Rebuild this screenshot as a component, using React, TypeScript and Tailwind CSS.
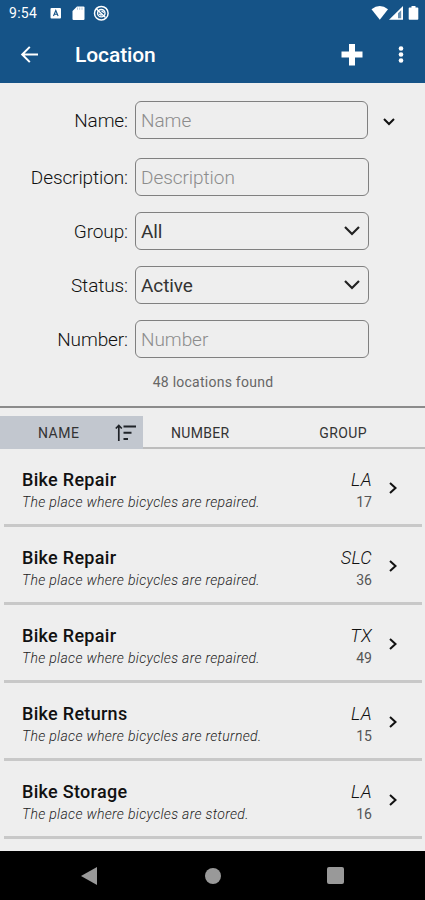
import { ReactNode } from "react";

interface LocationItem {
  name: string;
  description: string;
  group: string;
  count: number;
}

const locations: LocationItem[] = [
  { name: "Bike Repair", description: "The place where bicycles are repaired.", group: "LA", count: 17 },
  { name: "Bike Repair", description: "The place where bicycles are repaired.", group: "SLC", count: 36 },
  { name: "Bike Repair", description: "The place where bicycles are repaired.", group: "TX", count: 49 },
  { name: "Bike Returns", description: "The place where bicycles are returned.", group: "LA", count: 15 },
  { name: "Bike Storage", description: "The place where bicycles are stored.", group: "LA", count: 16 },
];

function StatusBar() {
  return (
    <div className="flex h-[26px] items-center pl-[9px] pr-[6px]">
      <span className="w-[41px] text-[14px] leading-[28px] tracking-[0.3px]">9:54</span>
      <svg className="h-[26px] w-[62px]" viewBox="50 0 62 26" fill="none">
        <rect x="50.5" y="8" width="10.5" height="10.5" rx="1" fill="#fff" />
        <path d="M53.5 16l2.3-5.5 2.3 5.5M54.3 14.2h3" stroke="#155387" strokeWidth="1.1" />
        <path d="M77 6.500h6.500q1 0 1 1V19q0 1-1 1H73.500q-1 0-1-1v-8z" fill="#fff" />
        <path d="M77.500 7.500v2.300M79.700 7.500v2.300M82 7.500v2.300" stroke="#155387" strokeOpacity=".4" strokeWidth=".8" />
        <circle cx="101.300" cy="13.200" r="6.800" stroke="#fff" strokeWidth="1.500" />
        <circle cx="101.300" cy="13.200" r="3.700" stroke="#fff" strokeWidth="1.400" />
        <path d="M96.500 9l9 8.500M99 14l2.500 1.500M101.500 11l2.500 1.500" stroke="#fff" strokeWidth="1.400" />
      </svg>
      <svg className="ml-auto h-[26px] w-[48px]" viewBox="371 0 48 26">
        <path d="M371.500 9.300Q379.800 2.500 388 9.300L379.800 19.700z" fill="#fff" />
        <path d="M389 19.700L403 6v13.700z" fill="#fff" />
        <path d="M398 13.200l3.200-3v8h-3.200z" fill="#155387" fillOpacity=".65" />
        <path d="M409.500 7.500h2V6h4v1.500h2q.8 0 .8.800v10.600q0 .8-.8.800h-8q-.8 0-.8-.8V8.300q0-.8.800-.8z" fill="#fff" />
      </svg>
    </div>
  );
}

function AppBar() {
  return (
    <div className="flex h-[57px] items-center pl-5">
      <button aria-label="Back">
        <svg className="h-5 w-5" viewBox="0 0 20 20" fill="none" stroke="#fff" strokeWidth="2">
          <path d="M18 9.500H2.500M9.800 1.900L2.200 9.500l7.600 7.600" />
        </svg>
      </button>
      <h1 className="ml-[35px] pt-px text-[21px] font-medium leading-7 tracking-[-0.1px]">Location</h1>
      <button aria-label="Add" className="ml-auto">
        <svg className="h-[22px] w-[22px]" viewBox="0 0 22 22" fill="#fff">
          <path d="M8 0h6v7.500h7.500v6H14V21.500H8v-8H.5v-6H8z" />
        </svg>
      </button>
      <button aria-label="More" className="ml-[33px] mr-[19px]">
        <svg className="h-5 w-[10px]" viewBox="0 0 10 20" fill="#fff">
          <circle cx="5" cy="3.500" r="2.300" />
          <circle cx="5" cy="9.500" r="2.300" />
          <circle cx="5" cy="15.500" r="2.300" />
        </svg>
      </button>
    </div>
  );
}

function FieldRow({ label, children }: { label: string; children: ReactNode }) {
  return (
    <label className="flex h-[38px] items-center">
      <span className="mr-[7px] w-32 pt-[3px] text-right text-[19px] font-light tracking-[-0.1px] text-[#111]">
        {label}:
      </span>
      {children}
    </label>
  );
}

function TextField({ placeholder, className = "w-[234px]" }: { placeholder: string; className?: string }) {
  return (
    <input
      placeholder={placeholder}
      className={`h-[38px] rounded-[6px] border border-[#808080] bg-transparent px-[5px] pt-px text-[19px] font-light tracking-[-0.05px] outline-none placeholder:text-[#8c8c8c] ${className}`}
    />
  );
}

function SelectField({ value }: { value: string }) {
  return (
    <button className="flex h-[38px] w-[234px] items-center justify-between rounded-[6px] border border-[#808080] pl-[5px] pr-2 text-[19px] tracking-[-0.1px] text-[#333]">
      <span className="pt-[2px]">{value}</span>
      <svg className="h-[10px] w-4" viewBox="0 0 16 10" fill="none" stroke="#222" strokeWidth="2.200">
        <path d="M1 1l7 7 7-7" />
      </svg>
    </button>
  );
}

function SearchForm() {
  return (
    <div className="flex h-[325px] flex-col border-b-2 border-[#8b8b8b] pt-[18px]">
      <FieldRow label="Name">
        <TextField placeholder="Name" className="w-[233px]" />
        <svg className="ml-[15px] mt-[3px] h-2 w-3" viewBox="0 0 12 8" fill="none" stroke="#111" strokeWidth="2">
          <path d="M1 1l5 5 5-5" />
        </svg>
      </FieldRow>
      <div className="mt-[19px] flex flex-col gap-4">
        <FieldRow label="Description">
          <TextField placeholder="Description" />
        </FieldRow>
        <FieldRow label="Group">
          <SelectField value="All" />
        </FieldRow>
        <FieldRow label="Status">
          <SelectField value="Active" />
        </FieldRow>
        <FieldRow label="Number">
          <TextField placeholder="Number" />
        </FieldRow>
      </div>
      <p className="mt-[14px] pl-px text-center text-[14px] leading-5 tracking-[0.25px] text-[#666]">
        48 locations found
      </p>
    </div>
  );
}

function ColumnHeader() {
  return (
    <div className="mt-2 flex h-[33px] text-[14px] leading-[35px] tracking-[0.2px] text-[#333]">
      <div className="flex w-[143px] items-center bg-[#c2c7cf] pl-[38px]">
        <span className="w-[77px] pt-px tracking-[0.5px]">NAME</span>
        <svg className="h-5 w-[22px]" viewBox="0 0 22 20" fill="none" stroke="#1f2328">
          <path d="M3.800 18V3M.8 5.500L3.800 2.500l3 3" strokeWidth="1.700" />
          <path d="M8.500 3.500H21M8.500 9.800h8M8.500 16H13" strokeWidth="2" />
        </svg>
      </div>
      <div className="flex flex-1 justify-between border-b-2 border-[#bdbdbd] pl-7 pr-[58px]">
        <span className="tracking-[0.3px]">NUMBER</span>
        <span className="tracking-[0.4px]">GROUP</span>
      </div>
    </div>
  );
}

function LocationRow({ item }: { item: LocationItem }) {
  return (
    <div className="ml-1 mr-[3px] flex h-[78px] items-center border-b-[3px] border-[#c8c8c8] pl-[18px] pr-[25px]">
      <div className="flex-1 pt-2">
        <div className="text-[18px] font-medium leading-[22px] tracking-[0.3px] text-[#111]">{item.name}</div>
        <div className="text-[14px] font-light italic leading-[22px] tracking-[0.32px] text-[#222]">
          {item.description}
        </div>
      </div>
      <div className="pt-2 text-right">
        <div className="text-[18px] font-light italic leading-[22px] tracking-[0.3px] text-[#111]">{item.group}</div>
        <div className="text-[14px] leading-[22px] text-[#555]">{item.count}</div>
      </div>
      <svg className="ml-[17px] mt-[2px] h-3 w-2" viewBox="0 0 8 12" fill="none" stroke="#111" strokeWidth="2">
        <path d="M1 1l5.500 5L1 11" />
      </svg>
    </div>
  );
}

function NavigationBar() {
  return (
    <div className="flex h-[49px] items-center justify-between bg-black pl-[81px] pr-[81px]">
      <svg className="h-[18px] w-4" viewBox="0 0 16 18" fill="#999">
        <path d="M0 9L16 0v18z" />
      </svg>
      <div className="ml-px h-4 w-4 rounded-full bg-[#999]" />
      <div className="h-[17px] w-[17px] rounded-[2px] bg-[#999]" />
    </div>
  );
}

export default function App() {
  return (
    <div className="flex h-[900px] w-[425px] flex-col overflow-hidden bg-[#eee] font-[Roboto,sans-serif]">
      <header className="h-[83px] shrink-0 bg-[#155387] text-white">
        <StatusBar />
        <AppBar />
      </header>
      <main className="h-[768px] overflow-hidden">
        <SearchForm />
        <ColumnHeader />
        {locations.map((item, index) => (
          <LocationRow key={index} item={item} />
        ))}
      </main>
      <NavigationBar />
    </div>
  );
}
